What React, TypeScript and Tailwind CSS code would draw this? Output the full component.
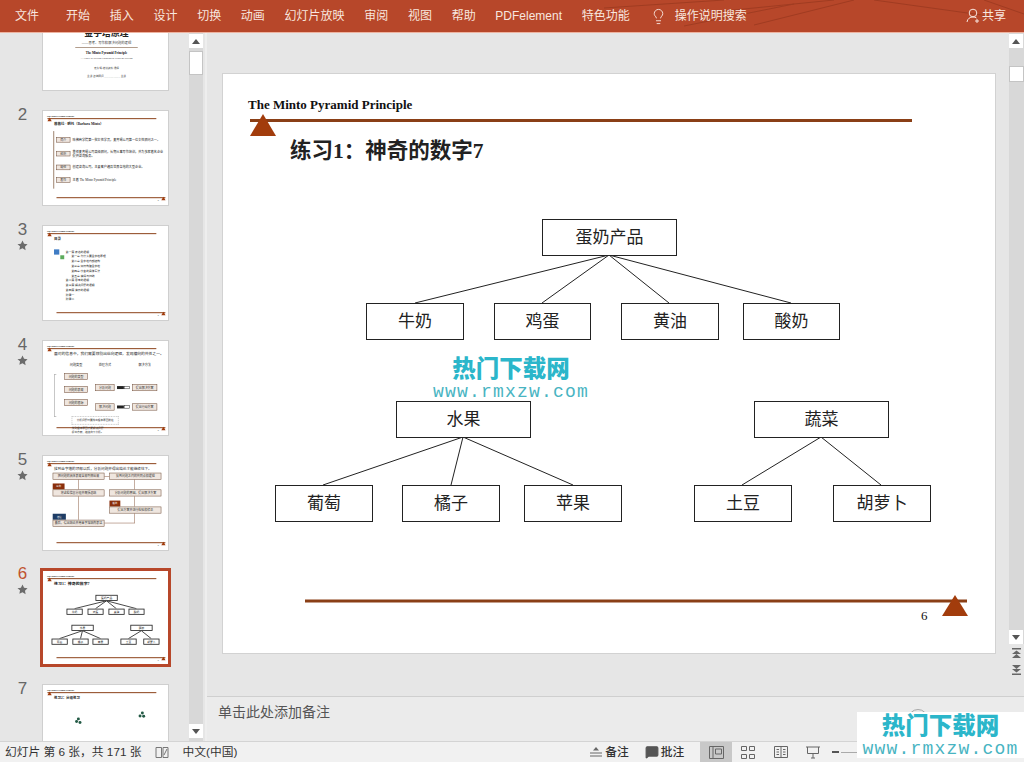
import React from 'react';
import { Lightbulb, MessageSquare } from 'lucide-react';

const SERIF = "font-['Liberation_Serif','Noto_Sans_CJK_SC',serif]";

const Tag: React.FC<{ text: string; w?: string; fill?: string }> = ({ text, w = 'w-[72px]', fill = 'bg-[#8a2f0c]' }) => (
  <div className={`flex h-[37px] shrink-0 items-center justify-center text-[14px] text-white ${w} ${fill}`}>{text}</div>
);

const Node: React.FC<{ className?: string; text: string }> = ({ className = '', text }) => (
  <div className={`flex shrink-0 items-center justify-center overflow-hidden whitespace-nowrap border-[3px] border-[#6f4d39] bg-[#efe6df] text-[18px] text-[#333] ${className}`}>{text}</div>
);

const Title: React.FC<{ text: string; className?: string }> = ({ text, className = 'text-[21px]' }) => (
  <div className={`h-[30px] shrink-0 whitespace-nowrap font-bold leading-[30px] text-[#222] ${className}`}>{text}</div>
);

const Frame: React.FC<{ children?: React.ReactNode; main?: boolean }> = ({ children, main }) => {
  const stroke = main ? 3 : 6;
  return (
    <div className={`relative h-[579px] w-[772px] overflow-hidden bg-white ${SERIF}`}>
      <div className="absolute left-[25px] top-[23px] whitespace-nowrap text-[13px] font-bold leading-[16px] text-[#111]">The Minto Pyramid Principle</div>
      <svg className="absolute left-0 top-0" width="772" height="579">
        <line x1="27" y1="46.5" x2="689" y2="46.5" stroke="#8a3f16" strokeWidth={stroke} />
        <polygon points="40,40 27,62 53,62" fill="#a23c0c" />
        <line x1="82" y1="527" x2="744" y2="527" stroke="#8a3f16" strokeWidth={stroke} />
        <polygon points="732,521 719,542 745,542" fill="#a23c0c" />
      </svg>
      <div className="absolute left-[698px] top-[532px] text-[13px] text-[#111]">6</div>
      <div className="relative flex h-full flex-col pl-[67px] pr-[40px] pt-[62px]">{children}</div>
    </div>
  );
};

const treeNodes = [
  { x: 319, y: 145, w: 135, text: '蛋奶产品' },
  { x: 143, y: 229, w: 98, text: '牛奶' },
  { x: 271, y: 229, w: 97, text: '鸡蛋' },
  { x: 398, y: 229, w: 98, text: '黄油' },
  { x: 520, y: 229, w: 97, text: '酸奶' },
  { x: 173, y: 327, w: 135, text: '水果' },
  { x: 531, y: 327, w: 135, text: '蔬菜' },
  { x: 52, y: 411, w: 98, text: '葡萄' },
  { x: 179, y: 411, w: 98, text: '橘子' },
  { x: 301, y: 411, w: 98, text: '苹果' },
  { x: 471, y: 411, w: 98, text: '土豆' },
  { x: 610, y: 411, w: 98, text: '胡萝卜' },
];

const treeLines = [
  [386, 181, 192, 229], [386, 181, 319, 229], [386, 181, 446, 229], [386, 181, 568, 229],
  [240, 363, 100, 411], [240, 363, 228, 411], [240, 363, 350, 411],
  [598, 363, 519, 411], [598, 363, 658, 411],
];

const TreeSlide: React.FC<{ main?: boolean }> = ({ main }) => (
  <Frame main={main}>
    <Title text="练习1：神奇的数字7" className={main ? 'text-[21.5px]' : 'text-[24px]'} />
    <svg className="absolute left-0 top-0" width="772" height="579" stroke="#222" strokeWidth={main ? 1 : 5}>
      {treeLines.map((l, i) => <line key={i} x1={l[0]} y1={l[1]} x2={l[2]} y2={l[3]} />)}
    </svg>
    {treeNodes.map(n => (
      <div
        key={n.text}
        className={`absolute flex h-[37px] items-center justify-center border-[#222] bg-white text-[17px] text-[#222] ${main ? 'border' : 'border-[5px]'}`}
        style={{ left: n.x, top: n.y, width: n.w }}
      >
        {n.text}
      </div>
    ))}
  </Frame>
);

const CoverSlide: React.FC = () => (
  <div className={`flex h-[579px] w-[772px] flex-col items-center overflow-hidden bg-white pt-[190px] text-[#444] ${SERIF}`}>
    <div className="text-[54px] font-bold leading-[70px] text-[#222]">金字塔原理</div>
    <div className="mt-[8px] text-[20px]">——思考、写作和解决问题的逻辑</div>
    <div className="mt-[14px] h-[4px] w-[380px] bg-[#8a6a50]" />
    <div className="mt-[12px] text-[20px] font-bold text-[#111]">The Minto Pyramid Principle</div>
    <div className="mt-[6px] text-[16px]">— Logic in Writing Thinking &amp; Problem Solving</div>
    <div className="mt-[40px] text-[16px]">麦肯锡 培训资料 课程</div>
    <div className="mt-[26px] text-[16px]">主讲 咨询顾问 ____________ 主讲</div>
  </div>
);

const profileRows = [
  { tag: '简介', text: '哈佛商学院第一批女性学员，麦肯锡公司第一位女性顾问之一。' },
  { tag: '经历', text: '曾任麦肯锡公司高级顾问，长期从事写作培训，并为多家著名企业提供咨询服务。' },
  { tag: '现任', text: '创建咨询公司，主要客户遍及世界各地的大型企业。' },
  { tag: '著作', text: '主著 The Minto Pyramid Principle' },
];

const ProfileSlide: React.FC = () => (
  <Frame>
    <Title text="芭芭拉 · 明托（Barbara Minto）" />
    <div className="ml-[-4px] mt-[30px] flex h-[350px] flex-col justify-center gap-[44px] border-l-[5px] border-[#8a6a50] pl-[12px]">
      {profileRows.map(r => (
        <div key={r.tag} className="flex items-center gap-[14px] text-[19px] leading-[24px] text-[#222]">
          <Node text={r.tag} className="h-[32px] w-[86px]" />
          <span>{r.text}</span>
        </div>
      ))}
    </div>
  </Frame>
);

const tocLines = [
  { t: '第一篇 表达的逻辑', sub: false },
  { t: '第一章 为什么要金字塔原理', sub: true },
  { t: '第二章 金字塔内部结构', sub: true },
  { t: '第三章 如何构建金字塔', sub: true },
  { t: '第四章 序言的具体写法', sub: true },
  { t: '第五章 演绎与归纳', sub: true },
  { t: '第二篇 思考的逻辑', sub: false },
  { t: '第三篇 解决问题的逻辑', sub: false },
  { t: '第四篇 演示的逻辑', sub: false },
  { t: '附录一', sub: false },
  { t: '附录二', sub: false },
];

const TocSlide: React.FC = () => (
  <Frame>
    <Title text="目录" />
    <div className="mt-[50px] flex gap-[10px]">
      <div className="flex flex-col gap-[4px]">
        <div className="h-[32px] w-[32px] bg-[#3f7cc4]" />
        <div className="ml-[38px] h-[24px] w-[24px] bg-[#5cab5c]" />
      </div>
      <div className="flex flex-col text-[17px] leading-[29px] text-[#222]">
        {tocLines.map(l => <div key={l.t} className={l.sub ? 'ml-[34px]' : ''}>{l.t}</div>)}
      </div>
    </div>
  </Frame>
);

const Arrow = () => (
  <div className="flex h-[42px] items-center">
    <div className="h-[18px] w-[42px] bg-[#222]" />
    <div className="h-[18px] w-[36px] border-[3px] border-[#222] bg-white" />
  </div>
);

const CompareSlide: React.FC = () => (
  <Frame>
    <Title text="面对的信息中，我们需要辨别出纵向逻辑，发现横向的共性之一。" className="text-[23px] font-normal" />
    <div className="mt-[40px] flex text-[19px] leading-[26px] text-[#222]">
      <div className="mt-[72px] h-[255px] w-[14px] shrink-0 border-2 border-r-0 border-[#555]" />
      <div className="ml-[49px] flex w-[142px] shrink-0 flex-col gap-[37px]">
        <div className="text-center">问题类型</div>
        <Node text="问题的类型" className="h-[42px]" />
        <Node text="问题的表现" className="h-[42px]" />
        <Node text="问题的根源" className="h-[42px]" />
      </div>
      <div className="ml-[47px] flex w-[115px] shrink-0 flex-col">
        <div className="text-center">处理方式</div>
        <Node text="分析问题" className="mt-[104px] h-[42px]" />
        <Node text="解决问题" className="mt-[76px] h-[42px]" />
      </div>
      <div className="ml-[16px] flex w-[78px] shrink-0 flex-col">
        <div className="h-[26px]" />
        <div className="mt-[104px]"><Arrow /></div>
        <div className="mt-[76px]"><Arrow /></div>
      </div>
      <div className="ml-[14px] flex w-[152px] shrink-0 flex-col">
        <div className="text-center">解决方法</div>
        <Node text="提出解决方案" className="mt-[104px] h-[42px]" />
        <Node text="提出行动方案" className="mt-[76px] h-[42px]" />
      </div>
    </div>
    <div className="ml-[108px] mt-[-1px] flex h-[50px] w-[284px] items-center justify-center border-2 border-dashed border-[#666] text-[16px] text-[#333]">分析问题时要找出根本原因所在</div>
    <div className="ml-[108px] mt-[12px] text-[16px] leading-[24px] text-[#333]">找到根本原因才能解决问题<br />提出方案，继续向下分析。</div>
  </Frame>
);

const FlowSlide: React.FC = () => (
  <Frame>
    <Title text="找到金字塔的顶部以后，分析问题并得出结论才能继续往下。" className="text-[22px] font-normal" />
    <div className="ml-[-8px] mt-[10px] flex">
      <div className="flex w-[314px] shrink-0 flex-col">
        <Node text="把问题的具体表现全部列举出来" className="h-[41px]" />
        <div className="flex h-[61px] items-end">
          <Tag text="纵向" />
          <div className="ml-[84px] h-full w-[3px] bg-[#8a5a40]" />
        </div>
        <Node text="将这些信息分组并概括总结" className="h-[41px]" />
        <div className="flex h-[143px] items-end">
          <Tag text="结论" w="w-[80px]" fill="bg-[#1f3d66]" />
          <div className="ml-[76px] h-full w-[3px] bg-[#8a5a40]" />
        </div>
        <Node text="最后，得出结论并用金字塔结构表达" className="h-[41px]" />
      </div>
      <div className="mt-[20px] h-[3px] w-[31px] shrink-0 bg-[#8a5a40]" />
      <div className="flex w-[315px] shrink-0 flex-col">
        <Node text="找到问题之间的共同点和逻辑" className="h-[41px]" />
        <div className="ml-[150px] h-[61px] w-[3px] bg-[#8a5a40]" />
        <Node text="分析问题的原因，提出解决方案" className="h-[41px]" />
        <div className="flex h-[63px] items-end">
          <Tag text="横向" w="w-[66px]" />
          <div className="ml-[84px] h-full w-[3px] bg-[#8a5a40]" />
        </div>
        <Node text="提出方案并进行检验和修正" className="h-[41px]" />
        <div className="ml-[-31px] h-[60px] w-[184px] border-b-[3px] border-r-[3px] border-[#8a5a40]" />
      </div>
    </div>
  </Frame>
);

const DotsSlide: React.FC = () => (
  <Frame>
    <Title text="练习2：分组练习" />
    <svg className="absolute left-0 top-0" width="772" height="579" fill="#235a45">
      <circle cx="215" cy="206" r="9" /><circle cx="204" cy="222" r="9" /><circle cx="225" cy="228" r="9" />
      <circle cx="604" cy="170" r="9" /><circle cx="590" cy="188" r="9" /><circle cx="612" cy="190" r="9" />
    </svg>
  </Frame>
);

const Star = () => (
  <svg width="11" height="11" viewBox="0 0 24 24" fill="#6b6b6b">
    <path d="M12 1l3.4 7.2 7.6 1-5.6 5.4 1.4 7.9L12 17.8l-6.8 3.7 1.4-7.9L1 9.2l7.6-1z" />
  </svg>
);

const ThumbRow: React.FC<{ n?: number; star?: boolean; selected?: boolean; first?: boolean; children: React.ReactNode }> = ({ n, star, selected, first, children }) => (
  <div className={`flex shrink-0 ${first ? 'mt-[-38px]' : ''} ${selected ? 'mb-[17px] mt-[-2px]' : 'mb-[19px]'}`}>
    <div className={`flex w-[46px] shrink-0 flex-col items-center pr-[1px] ${selected ? 'mt-[-4px]' : 'mt-[-5px]'}`}>
      {n && <span className={`text-[17px] leading-[19px] ${selected ? 'text-[#c0532f]' : 'text-[#666]'}`}>{n}</span>}
      {star && <span className="mt-[1px] flex"><Star /></span>}
    </div>
    <div
      className={selected
        ? 'relative ml-[-6px] h-[99px] w-[131px] overflow-hidden border-[3px] border-[#b7472a] bg-white'
        : 'relative ml-[-4px] h-[96px] w-[127px] overflow-hidden border border-[#cfcfcf] bg-white'}
    >
      <div className="origin-top-left scale-[0.1645]">{children}</div>
    </div>
  </div>
);

const ScrollBtn: React.FC<{ up?: boolean }> = ({ up }) => (
  <div className="flex h-[14px] w-[14px] shrink-0 items-center justify-center bg-white">
    <svg width="8" height="5" viewBox="0 0 8 5" fill="#555">
      <polygon points={up ? '4,0 8,5 0,5' : '0,0 8,0 4,5'} />
    </svg>
  </div>
);

const tabs = ['开始', '插入', '设计', '切换', '动画', '幻灯片放映', '审阅', '视图', '帮助', 'PDFelement', '特色功能'];

const Watermark: React.FC<{ className: string }> = ({ className }) => (
  <div className={`absolute flex flex-col items-center ${className}`}>
    <span className="whitespace-nowrap text-[23.5px] font-black leading-[28px] text-[#2bb6ca]">热门下载网</span>
    <span className="whitespace-nowrap font-['Liberation_Mono',monospace] text-[18px] leading-[19px] tracking-[1.2px] text-[#48b4c2]">www.rmxzw.com</span>
  </div>
);

export default function App() {
  return (
    <div className="relative flex h-[762px] w-[1024px] flex-col overflow-hidden bg-[#e6e6e6] font-['Liberation_Sans','Noto_Sans_CJK_SC',sans-serif]">
      {/* Title / tab bar */}
      <div className="relative flex h-[33px] shrink-0 items-center border-b border-[#eeb3a0] bg-[#b7472a] pl-[15px] pr-[18px] text-[12px] text-[#f8e6df]">
        <svg className="absolute right-0 top-0" width="420" height="32" stroke="#a03c22" strokeWidth="1" fill="none">
          <path d="M0 8 L120 0 M110 12 L230 0 M80 26 L190 4 M150 25 L250 0 M270 0 L385 16 M380 0 L420 14" />
        </svg>
        <span className="relative mr-[27px]">文件</span>
        <div className="relative flex items-center gap-[19.7px]">
          {tabs.map(t => <span key={t} className="whitespace-nowrap">{t}</span>)}
        </div>
        <Lightbulb size={17} strokeWidth={1.3} className="relative ml-[20px]" />
        <span className="relative ml-[8px] whitespace-nowrap">操作说明搜索</span>
        <div className="relative ml-auto flex items-center gap-[2px]">
          <svg width="14" height="16" viewBox="0 0 14 16" fill="none" stroke="#f8e6df" strokeWidth="1">
            <circle cx="7" cy="5" r="3.8" />
            <path d="M1 14 C1.5 10.5 4 9 7 9 C8.5 9 9.5 9.3 10.5 10 M11 11 V15 M9 13 H13" />
          </svg>
          <span>共享</span>
        </div>
      </div>

      <div className="flex min-h-0 flex-1">
        {/* Thumbnail pane */}
        <div className="flex w-[207px] shrink-0 border-r-2 border-[#eeeeee]">
          <div className="flex w-[189px] shrink-0 flex-col overflow-hidden">
            <ThumbRow first><CoverSlide /></ThumbRow>
            <ThumbRow n={2}><ProfileSlide /></ThumbRow>
            <ThumbRow n={3} star><TocSlide /></ThumbRow>
            <ThumbRow n={4} star><CompareSlide /></ThumbRow>
            <ThumbRow n={5} star><FlowSlide /></ThumbRow>
            <ThumbRow n={6} star selected><TreeSlide /></ThumbRow>
            <ThumbRow n={7}><DotsSlide /></ThumbRow>
          </div>
          <div className="flex w-[14px] shrink-0 flex-col bg-[#d8d8d8] pb-[3px] pt-[1px]">
            <ScrollBtn up />
            <div className="mt-[3px] h-[24px] w-[14px] border border-[#c4c4c4] bg-white" />
            <div className="flex-1" />
            <ScrollBtn />
          </div>
        </div>

        {/* Editor */}
        <div className="flex min-w-0 flex-1 flex-col">
          <div className="flex min-h-0 flex-1">
            <div className="flex-1 pl-[16px] pt-[41px]">
              <div className="w-[772px] shadow-[0_0_0_1px_#d2d2d2]"><TreeSlide main /></div>
            </div>
            <div className="flex w-[16px] shrink-0 flex-col items-end">
              <div className="flex h-[611px] w-[15px] flex-col bg-[#d8d8d8] pt-[1px]">
                <ScrollBtn up />
                <div className="mt-[18px] h-[16px] w-[15px] border border-[#c4c4c4] bg-white" />
                <div className="flex-1" />
                <ScrollBtn />
              </div>
              <div className="mt-[4px] flex w-[15px] flex-col items-center gap-[7px]">
                <svg width="9" height="10" viewBox="0 0 9 10" fill="#666"><rect width="9" height="1.5" /><polygon points="4.5,2.5 9,6 0,6" /><polygon points="4.5,6 9,10 0,10" /></svg>
                <svg width="9" height="10" viewBox="0 0 9 10" fill="#666"><polygon points="0,0 9,0 4.5,4" /><polygon points="0,4 9,4 4.5,7.5" /><rect y="8.5" width="9" height="1.5" /></svg>
              </div>
            </div>
          </div>
          {/* Notes */}
          <div className="relative flex h-[45px] shrink-0 items-start border-t border-[#cfcfcf] bg-[#ebebeb] pl-[11px] pt-[5px] text-[14px] leading-[20px] text-[#555]">
            单击此处添加备注
            <div className="absolute left-[701px] top-[12px] h-[20px] w-[20px] rounded-full border border-[#a8a8a8]" />
          </div>
        </div>
      </div>

      {/* Status bar */}
      <div className="flex h-[21px] shrink-0 items-center border-t border-[#d4d4d4] bg-[#f1f1f1] pl-[5px] text-[11.75px] text-[#333]">
        <span className="whitespace-nowrap">幻灯片 第 6 张，共 171 张</span>
        <svg className="ml-[14px]" width="14" height="13" viewBox="0 0 14 13" fill="none" stroke="#777"><path d="M1 1.5h5.5v10H1zM8 1.5h5v10H8zM9 9l3-6" /></svg>
        <span className="ml-[13px] whitespace-nowrap">中文(中国)</span>
        <svg className="ml-[353px]" width="12" height="12" viewBox="0 0 12 12" stroke="#666" fill="#666"><polygon points="6,1 9,4.5 3,4.5" stroke="none" /><path d="M0 7h12M0 10h12" fill="none" /></svg>
        <span className="ml-[3px] font-medium">备注</span>
        <MessageSquare size={14} fill="#555" stroke="#555" className="ml-[16px]" />
        <span className="ml-[2px] font-medium">批注</span>
        <div className="ml-[16px] flex h-[20px] w-[32px] items-center justify-center bg-[#c8c8c8]">
          <svg width="15" height="13" viewBox="0 0 15 13" fill="none" stroke="#666"><path d="M.5.5h14v12H.5zM4 .5v12M6.5 3h6v5h-6z" /></svg>
        </div>
        <svg className="ml-[9px]" width="14" height="13" viewBox="0 0 14 13" fill="none" stroke="#666"><path d="M.5.5h5v4h-5zM8.5.5h5v4h-5zM.5 8.5h5v4h-5zM8.5 8.5h5v4h-5z" /></svg>
        <svg className="ml-[19px]" width="14" height="12" viewBox="0 0 14 12" fill="none" stroke="#666"><path d="M.5.5h13v11H.5zM7 .5v11M2.5 3.5h2.5M2.5 6h2.5M2.5 8.5h2.5M9 3.5h2.5M9 6h2.5M9 8.5h2.5" /></svg>
        <svg className="ml-[18px]" width="14" height="13" viewBox="0 0 14 13" fill="none" stroke="#666"><path d="M0 1h14M1.5 1v6.5h11V1M7 7.5V12M5 12h4" /></svg>
        <div className="ml-[12px] h-[2px] w-[7px] bg-[#555]" />
        <div className="ml-[2px] h-[1px] w-[18px] bg-[#aaa]" />
      </div>

      {/* Watermarks */}
      <Watermark className="left-[433px] top-[355px] w-[156px]" />
      <Watermark className="left-[857px] top-[712px] h-[46px] w-[167px] bg-white" />
    </div>
  );
}
